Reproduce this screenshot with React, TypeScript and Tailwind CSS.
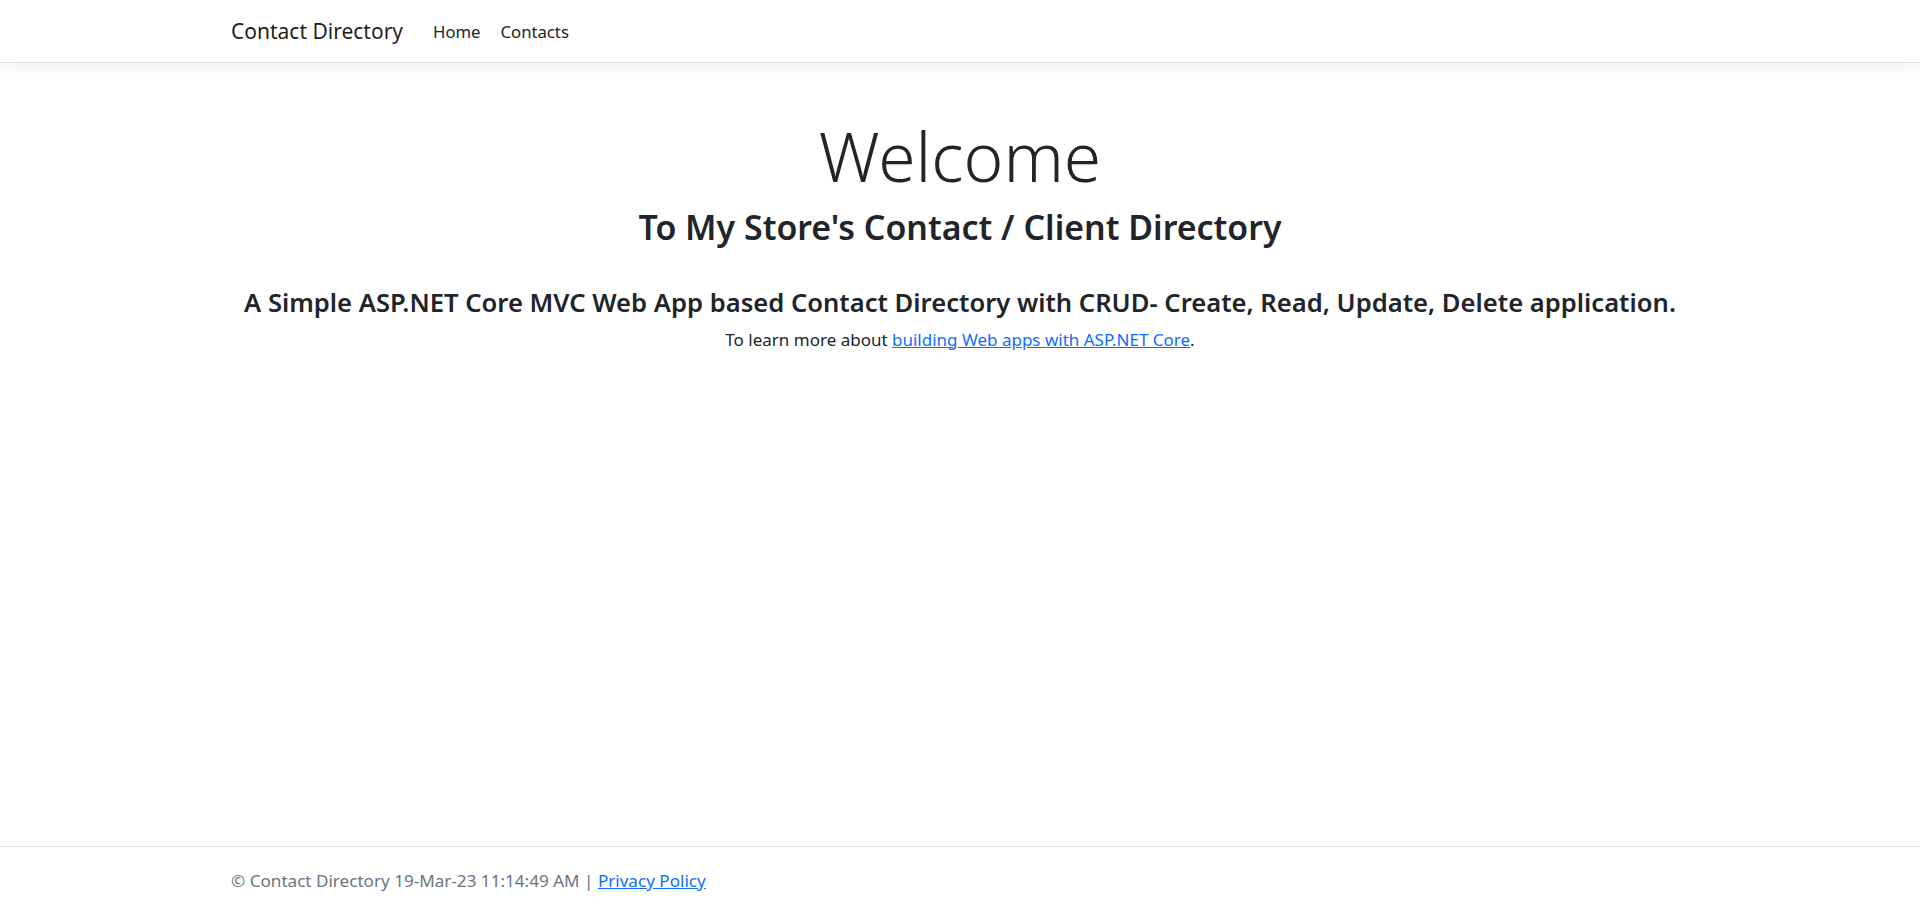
export default function App() {
  return (
    <div
      className="relative min-h-[913px] bg-white text-[#212529]"
      style={{ fontFamily: '"Segoe UI", "Noto Sans", "Open Sans", sans-serif' }}
    >
      <Header />
      <main className="pt-[53px] text-center">
        <h1 className="text-[67.6px] font-light leading-[1.2] mb-[10px]">Welcome</h1>
        <h3 className="text-[33.9px] font-semibold leading-[1.2] mb-[40px]">
          To My Store's Contact / Client Directory
        </h3>
        <h4 className="text-[25.6px] font-semibold leading-[1.2] mb-[8px]">
          A Simple ASP.NET Core MVC Web App based Contact Directory with CRUD- Create, Read, Update, Delete application.
        </h4>
        <p className="text-[17px] leading-[1.5]">
          To learn more about{" "}
          <a href="#" className="text-[#0d6efd] underline">
            building Web apps with ASP.NET Core
          </a>
          .
        </p>
      </main>
      <Footer />
    </div>
  )
}

function Header() {
  const navItems = ["Home", "Contacts"]

  return (
    <header className="h-[63px] border-b border-[#dee2e6] bg-white shadow-[0_5px_16px_rgba(0,0,0,0.05)]">
      <div className="flex h-full items-center pl-[231px] pt-[2px]">
        <a href="#" className="mr-[20px] text-[21px] leading-[1.5] text-[rgba(0,0,0,0.9)]">
          Contact Directory
        </a>
        <nav className="flex">
          {navItems.map((item) => (
            <a key={item} href="#" className="px-[10px] text-[16.7px] leading-[1.5] text-[#212529]">
              {item}
            </a>
          ))}
        </nav>
      </div>
    </header>
  )
}

function Footer() {
  return (
    <footer className="absolute bottom-0 left-0 right-0 flex h-[67px] items-center border-t border-[#dee2e6] pl-[231px] pt-[1px] text-[17.1px] text-[#6c757d] whitespace-nowrap">
      <span>
        &copy; Contact Directory 19-Mar-23 11:14:49 AM |{" "}
        <a href="#" className="text-[#0d6efd] underline">
          Privacy Policy
        </a>
      </span>
    </footer>
  )
}
